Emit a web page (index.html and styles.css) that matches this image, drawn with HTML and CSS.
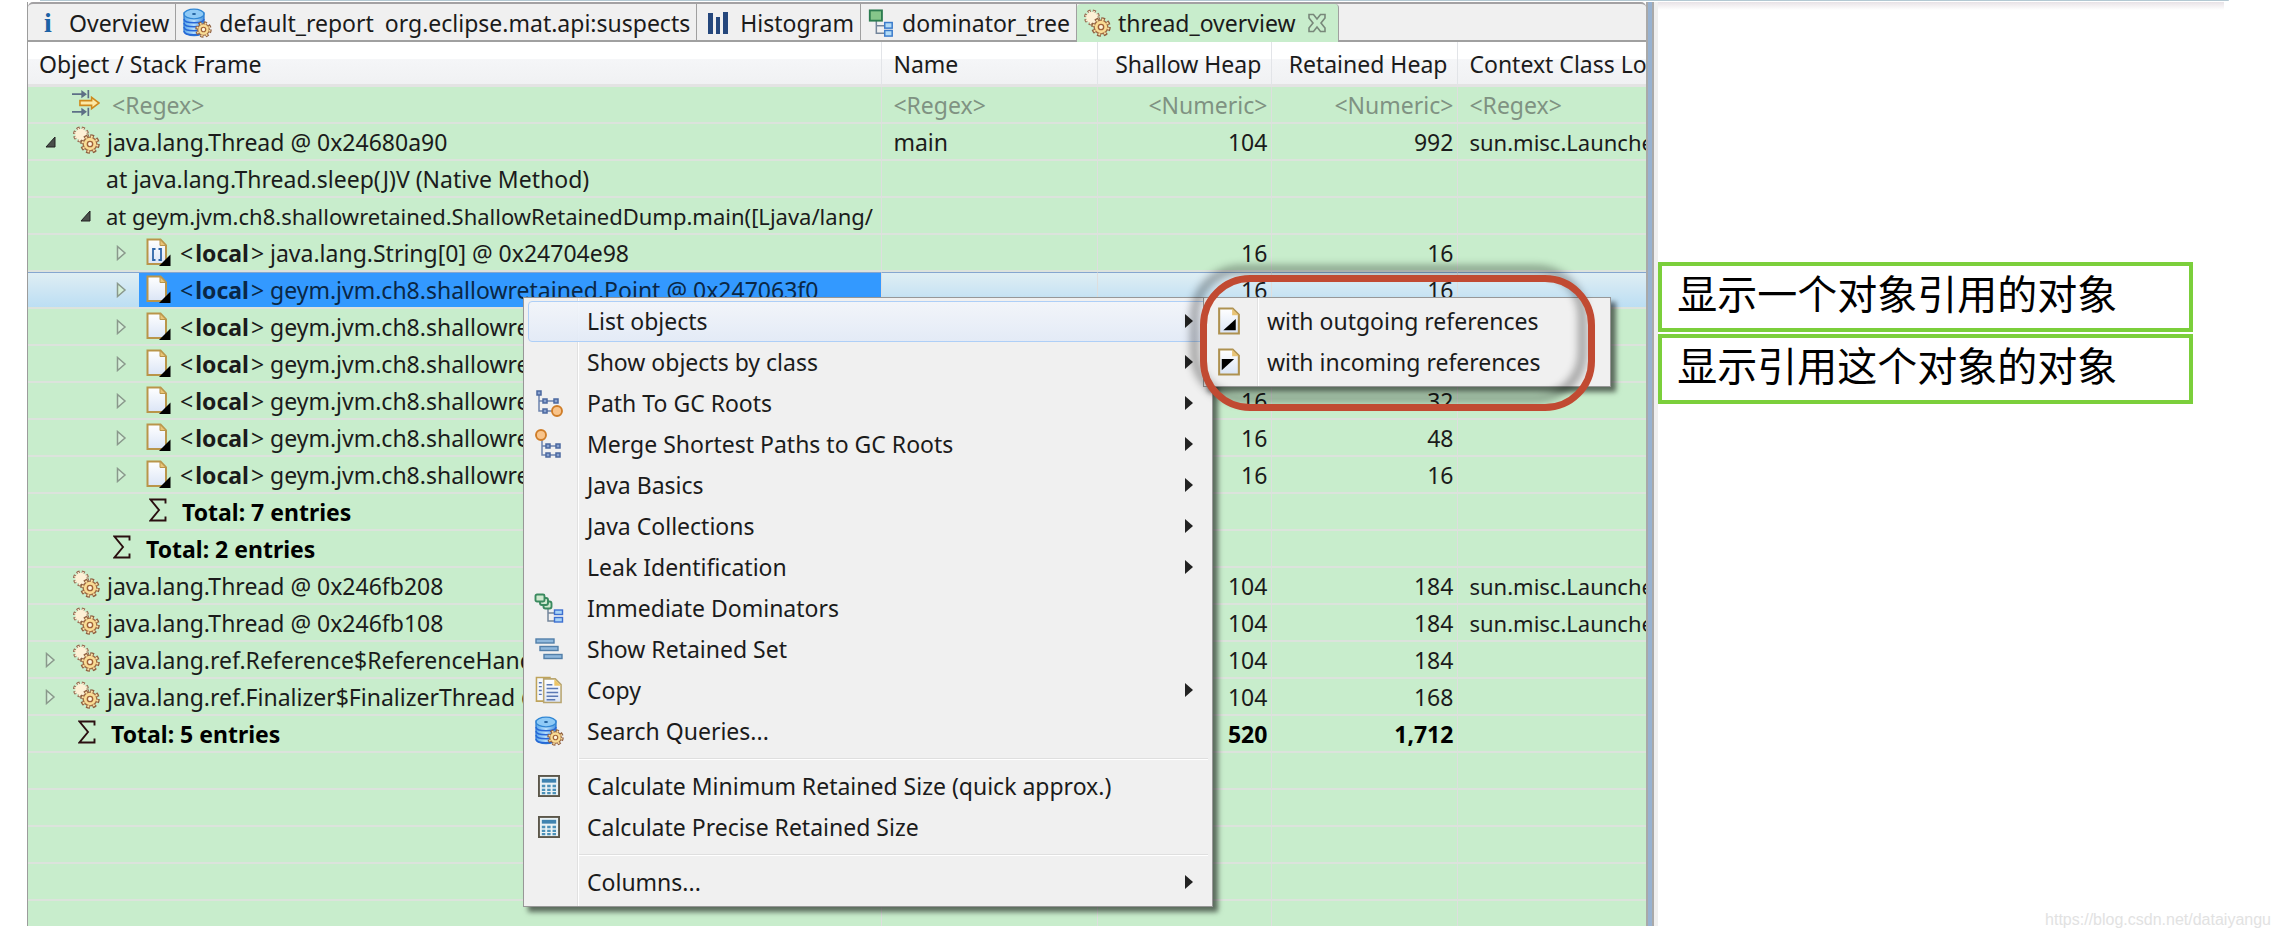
FILE: index.html
```html
<!DOCTYPE html>
<html lang="en">
<head>
<meta charset="utf-8">
<title>Memory Analyzer - thread_overview</title>
<link rel="stylesheet" href="styles.css">
</head>
<body>
<svg class="defs" aria-hidden="true">
  <defs>
    <linearGradient id="paper" x1="0" y1="0" x2="0" y2="1"><stop offset="0" stop-color="#fff"/><stop offset="1" stop-color="#dbe5f6"/></linearGradient>
    <linearGradient id="disk" x1="0" y1="0" x2="1" y2="0"><stop offset="0" stop-color="#5aa9ec"/><stop offset=".5" stop-color="#b9dffb"/><stop offset="1" stop-color="#4a95e0"/></linearGradient>
    <g id="gear">
      <circle r="5.7" fill="none" stroke="#8f5f40" stroke-width="2.6" stroke-dasharray="2.6 1.88"/>
      <circle r="4.9" fill="#f9dc94" stroke="#a06a42" stroke-width="1"/>
      <circle r="5.3" fill="none" stroke="#f8dfa2" stroke-width="1.5" stroke-dasharray="1.3 2.863" stroke-dashoffset="-.5"/>
      <circle r="1.9" fill="#fff6dc" stroke="#a06238" stroke-width="1"/>
    </g>
    <g id="gear-pale">
      <circle r="5.7" fill="none" stroke="#97694f" stroke-width="2.6" stroke-dasharray="2.6 1.88"/>
      <circle r="5" fill="#fdf1d6"/>
      <circle r="5.3" fill="none" stroke="#fdf1d6" stroke-width="1.5" stroke-dasharray="1.3 2.863" stroke-dashoffset="-.5"/>
    </g>
    <symbol id="i-gears" viewBox="0 0 28 28">
      <g transform="translate(9 8.5)"><use href="#gear-pale" transform="scale(1.15)"/></g>
      <g transform="translate(18 18)"><use href="#gear" transform="scale(1.4)"/></g>
    </symbol>
    <symbol id="i-db" viewBox="0 0 30 30">
      <path d="M2 5v18c0 6 20 6 20 0V5z" fill="url(#disk)" stroke="#2f7bd0" stroke-width="1.3"/>
      <path d="M2 11c0 5 20 5 20 0M2 15c0 5 20 5 20 0M2 19c0 5 20 5 20 0M2 23c0 5 20 5 20 0" fill="none" stroke="#2767d8" stroke-width="1.5"/>
      <ellipse cx="12" cy="6" rx="10" ry="4.8" fill="#8fcaf6" stroke="#2f86d4" stroke-width="1.3"/>
      <ellipse cx="12" cy="6" rx="2" ry="1" fill="#1f5f9e"/>
      <g transform="translate(21.5 21.5)"><use href="#gear" transform="scale(1.18)"/></g>
    </symbol>
    <symbol id="i-hist" viewBox="0 0 22 24"><path d="M1 2h5v21H1zM9 6h4v17H9zM16 1h5v22h-5z" fill="#25477c"/></symbol>
    <symbol id="i-dom" viewBox="0 0 28 30">
      <path d="M9 12v14h9M9 18h9" fill="none" stroke="#73859b" stroke-width="1.6"/>
      <rect x="2" y="1.500" width="13" height="11" fill="#86c68a" stroke="#2d7c50" stroke-width="2"/>
      <rect x="18" y="14.500" width="8" height="6" fill="#b3dcf7" stroke="#3c7ccb" stroke-width="1.6"/>
      <rect x="18" y="23" width="8" height="6" fill="#b3dcf7" stroke="#3c7ccb" stroke-width="1.6"/>
    </symbol>
    <symbol id="i-close" viewBox="0 0 20 20"><path d="M2 1.500h4.500L10 6l3.500-4.500H18V5l-4 5 4 5v3.500h-4.500L10 14l-3.500 4.500H2V15l4-5-4-5z" fill="none" stroke="#78877a" stroke-width="1.6"/></symbol>
    <symbol id="i-filter" viewBox="0 0 30 28">
      <path d="M0 4.500h13M0 23.500h13M17.500 0v9M17.500 19v9" stroke="#5d6f86" stroke-width="1.8"/>
      <path d="M10 0l6 4.500-6 4.500zM10 19l6 4.500-6 4.500z" fill="#5d6f86"/>
      <path d="M8.500 11.500H21V8l8 6-8 6v-3.500H8.500z" fill="#fdeaa6" stroke="#cf8a1c" stroke-width="1.7"/>
    </symbol>
    <symbol id="i-page" viewBox="0 0 25 28">
      <path d="M1.500 1.500h13L20 7.500V26H1.500z" fill="url(#paper)" stroke="#b9954a" stroke-width="2"/>
      <path d="M14 1.500v6h6z" fill="#e9c477" stroke="#b9954a"/>
      <path d="M24.500 16.500V28H13z" fill="#000"/>
    </symbol>
    <symbol id="i-array" viewBox="0 0 25 28">
      <use href="#i-page"/>
      <path d="M9.500 11H7v11h2.500M12.500 11H15v11h-2.500" fill="none" stroke="#2f66a8" stroke-width="1.8"/>
    </symbol>
    <symbol id="i-sigma" viewBox="0 0 18 24"><path d="M16.500 5.500V1.500H1.500L10 12 1.500 22.500h15v-4" fill="none" stroke="#2a0f10" stroke-width="1.900"/></symbol>
    <symbol id="i-open" viewBox="0 0 16 12"><path d="M13 1v10H4z" fill="#4a4f4b" stroke="#222"/></symbol>
    <symbol id="i-shut" viewBox="0 0 12 16"><path d="M2.500 1.500v13L10 8z" fill="#d5f0d8" stroke="#8a998c" stroke-width="1.500"/></symbol>
    <symbol id="i-path" viewBox="0 0 28 28">
      <path d="M4 4v18h14M4 12h16" fill="none" stroke="#6c83ad" stroke-width="1.500"/>
      <path d="M2 2h4v4H2zM8 10h4v4H8zM19 10h4v4h-4zM8 20h4v4H8z" fill="#8aa3d0" stroke="#4b689f" stroke-width="1.500"/>
      <circle cx="22" cy="22" r="5" fill="#f9c48a" stroke="#cf7d28" stroke-width="1.900"/>
    </symbol>
    <symbol id="i-merge" viewBox="0 0 28 30">
      <path d="M7 11v15h18M7 17h18" fill="none" stroke="#6c83ad" stroke-width="1.500"/>
      <path d="M11 15h4v4h-4zM21 15h4v4h-4zM11 24h4v4h-4zM21 24h4v4h-4z" fill="#8aa3d0" stroke="#4b689f" stroke-width="1.500"/>
      <circle cx="6" cy="6" r="5" fill="#f9c48a" stroke="#cf7d28" stroke-width="1.900"/>
    </symbol>
    <symbol id="i-imm" viewBox="0 0 30 30">
      <path d="M14 15v13h8M14 20h8" fill="none" stroke="#73859b" stroke-width="1.500"/>
      <g fill="#cfe9cf" stroke="#3a8a5f" stroke-width="1.900"><rect x="9.500" y="8.500" width="8" height="7" rx="2"/><rect x="6" y="5" width="8" height="7" rx="2"/><rect x="1.500" y="1.500" width="9" height="7" rx="1.500"/></g>
      <rect x="20.500" y="17" width="8" height="4.500" fill="#a8d4f8" stroke="#3c6fd0" stroke-width="1.400"/>
      <rect x="20.500" y="24.500" width="8" height="4.500" fill="#a8d4f8" stroke="#3c6fd0" stroke-width="1.400"/>
    </symbol>
    <symbol id="i-set" viewBox="0 0 28 22"><g fill="#8fb8dc" stroke="#527fa9" stroke-width="1.400"><rect x="1" y="1" width="18" height="4"/><rect x="5" y="8.500" width="18" height="4"/><rect x="9" y="16.500" width="18" height="4"/></g></symbol>
    <symbol id="i-copy" viewBox="0 0 29 29">
      <path d="M1.500 1.500h14V26h-14z" fill="#f5f8fd" stroke="#bfa35a" stroke-width="1.600"/>
      <path d="M4 7h3M4 11h3M4 15h3M4 19h3" stroke="#5a78b4" stroke-width="1.400"/>
      <path d="M9 3h12l6 6v18.500H9z" fill="url(#paper)" stroke="#b8a570" stroke-width="1.600"/>
      <path d="M20 3v7h7z" fill="#edc566"/>
      <path d="M12 9h6M12 13h12M12 17h12M12 21h12M12 24.500h9" stroke="#5a78b4" stroke-width="1.500"/>
    </symbol>
    <symbol id="i-calc" viewBox="0 0 23 23">
      <rect x="1" y="1" width="21" height="21" fill="#e9f2f5" stroke="#5c574a" stroke-width="2"/>
      <path d="M4 4h15v4H4z" fill="#3f83b0"/>
      <path d="M4 11.500h15M4 15.500h15M4 19h15" stroke="#4c91b8" stroke-width="2.400" stroke-dasharray="3.600 2"/>
    </symbol>
    <symbol id="i-out" viewBox="0 0 22 27">
      <path d="M1.500 1.500h13l6 6V25.500h-19z" fill="url(#paper)" stroke="#ae9150" stroke-width="2"/>
      <path d="M14 1.500v6.500h6.500z" fill="#e9c477"/><path d="M17.500 11.500v11H5.500z"/>
    </symbol>
    <symbol id="i-in" viewBox="0 0 22 27">
      <path d="M1.500 1.500h13l6 6V25.500h-19z" fill="url(#paper)" stroke="#ae9150" stroke-width="2"/>
      <path d="M14 1.500v6.500h6.500z" fill="#e9c477"/><path d="M4 10.500v11l12-11z"/>
    </symbol>
    <symbol id="i-more" viewBox="0 0 8 14"><path d="M0 0v14l8-7z" fill="#222"/></symbol>
  </defs>
</svg>

<div class="page">
  <main class="workbench">
    <section class="view">
      <nav class="tabs" role="tablist">
        <button class="tab" role="tab"><span class="info">i</span>Overview</button>
        <button class="tab" role="tab"><svg class="ic30"><use href="#i-db"/></svg><span>default_report</span><span class="second">org.eclipse.mat.api:suspects</span></button>
        <button class="tab" role="tab"><svg class="ic22"><use href="#i-hist"/></svg>Histogram</button>
        <button class="tab" role="tab"><svg class="ic28"><use href="#i-dom"/></svg>dominator_tree</button>
        <button class="tab active" role="tab" aria-selected="true"><svg class="ic28"><use href="#i-gears"/></svg>thread_overview<svg class="close"><use href="#i-close"/></svg></button>
      </nav>
      <table class="tree">
        <colgroup><col class="c-object"><col class="c-name"><col class="c-shallow"><col class="c-retained"><col class="c-loader"></colgroup>
        <thead>
          <tr><th>Object / Stack Frame</th><th>Name</th><th class="num">Shallow Heap</th><th class="num">Retained Heap</th><th>Context Class Lo</th></tr>
        </thead>
        <tbody>
          <tr class="filter"><td><div class="node l0"><span class="tw"></span><svg class="icon"><use href="#i-filter"/></svg><span class="label">&lt;Regex&gt;</span></div></td><td>&lt;Regex&gt;</td><td class="num">&lt;Numeric&gt;</td><td class="num">&lt;Numeric&gt;</td><td>&lt;Regex&gt;</td></tr>
          <tr><td><div class="node l0"><svg class="tw open"><use href="#i-open"/></svg><svg class="icon"><use href="#i-gears"/></svg><span class="label">java.lang.Thread @ 0x24680a90</span></div></td><td>main</td><td class="num">104</td><td class="num">992</td><td class="tight">sun.misc.Launche</td></tr>
          <tr><td><div class="node l1"><span class="tw"></span><span class="label">at java.lang.Thread.sleep(J)V (Native Method)</span></div></td><td></td><td></td><td></td><td></td></tr>
          <tr><td><div class="node l1"><svg class="tw open"><use href="#i-open"/></svg><span class="label tight">at geym.jvm.ch8.shallowretained.ShallowRetainedDump.main([Ljava/lang/</span></div></td><td></td><td></td><td></td><td></td></tr>
          <tr><td><div class="node l2"><svg class="tw"><use href="#i-shut"/></svg><span class="item"><svg class="icon"><use href="#i-array"/></svg><span class="label">&lt;<b>local</b>&gt; java.lang.String[0] @ 0x24704e98</span></span></div></td><td></td><td class="num">16</td><td class="num">16</td><td></td></tr>
          <tr class="selected"><td><div class="node l2"><svg class="tw"><use href="#i-shut"/></svg><span class="item"><svg class="icon"><use href="#i-page"/></svg><span class="label">&lt;<b>local</b>&gt; geym.jvm.ch8.shallowretained.Point @ 0x247063f0</span></span></div></td><td></td><td class="num">16</td><td class="num">16</td><td></td></tr>
          <tr><td><div class="node l2"><svg class="tw"><use href="#i-shut"/></svg><span class="item"><svg class="icon"><use href="#i-page"/></svg><span class="label">&lt;<b>local</b>&gt; geym.jvm.ch8.shallowre</span></span></div></td><td></td><td></td><td></td><td></td></tr>
          <tr><td><div class="node l2"><svg class="tw"><use href="#i-shut"/></svg><span class="item"><svg class="icon"><use href="#i-page"/></svg><span class="label">&lt;<b>local</b>&gt; geym.jvm.ch8.shallowre</span></span></div></td><td></td><td></td><td></td><td></td></tr>
          <tr><td><div class="node l2"><svg class="tw"><use href="#i-shut"/></svg><span class="item"><svg class="icon"><use href="#i-page"/></svg><span class="label">&lt;<b>local</b>&gt; geym.jvm.ch8.shallowre</span></span></div></td><td></td><td class="num">16</td><td class="num">32</td><td></td></tr>
          <tr><td><div class="node l2"><svg class="tw"><use href="#i-shut"/></svg><span class="item"><svg class="icon"><use href="#i-page"/></svg><span class="label">&lt;<b>local</b>&gt; geym.jvm.ch8.shallowre</span></span></div></td><td></td><td class="num">16</td><td class="num">48</td><td></td></tr>
          <tr><td><div class="node l2"><svg class="tw"><use href="#i-shut"/></svg><span class="item"><svg class="icon"><use href="#i-page"/></svg><span class="label">&lt;<b>local</b>&gt; geym.jvm.ch8.shallowre</span></span></div></td><td></td><td class="num">16</td><td class="num">16</td><td></td></tr>
          <tr class="total"><td><div class="node l2"><span class="tw"></span><svg class="sigma"><use href="#i-sigma"/></svg><span class="label">Total: 7 entries</span></div></td><td></td><td></td><td></td><td></td></tr>
          <tr class="total"><td><div class="node l1"><span class="tw"></span><svg class="sigma"><use href="#i-sigma"/></svg><span class="label">Total: 2 entries</span></div></td><td></td><td></td><td></td><td></td></tr>
          <tr><td><div class="node l0"><span class="tw"></span><svg class="icon"><use href="#i-gears"/></svg><span class="label">java.lang.Thread @ 0x246fb208</span></div></td><td></td><td class="num">104</td><td class="num">184</td><td class="tight">sun.misc.Launche</td></tr>
          <tr><td><div class="node l0"><span class="tw"></span><svg class="icon"><use href="#i-gears"/></svg><span class="label">java.lang.Thread @ 0x246fb108</span></div></td><td></td><td class="num">104</td><td class="num">184</td><td class="tight">sun.misc.Launche</td></tr>
          <tr><td><div class="node l0"><svg class="tw"><use href="#i-shut"/></svg><svg class="icon"><use href="#i-gears"/></svg><span class="label">java.lang.ref.Reference$ReferenceHand</span></div></td><td></td><td class="num">104</td><td class="num">184</td><td></td></tr>
          <tr><td><div class="node l0"><svg class="tw"><use href="#i-shut"/></svg><svg class="icon"><use href="#i-gears"/></svg><span class="label">java.lang.ref.Finalizer$FinalizerThread @</span></div></td><td></td><td class="num">104</td><td class="num">168</td><td></td></tr>
          <tr class="total"><td><div class="node l0"><span class="tw"></span><svg class="sigma"><use href="#i-sigma"/></svg><span class="label">Total: 5 entries</span></div></td><td></td><td class="num">520</td><td class="num">1,712</td><td></td></tr>
          <tr><td></td><td></td><td></td><td></td><td></td></tr>
          <tr><td></td><td></td><td></td><td></td><td></td></tr>
          <tr><td></td><td></td><td></td><td></td><td></td></tr>
          <tr><td></td><td></td><td></td><td></td><td></td></tr>
          <tr class="last"><td></td><td></td><td></td><td></td><td></td></tr>
        </tbody>
      </table>
    </section>
    <div class="sash"></div>

    <div class="menu context" role="menu">
      <button class="mi hot" role="menuitem"><span class="mic"></span><span class="mt">List objects</span><svg class="more"><use href="#i-more"/></svg></button>
      <button class="mi" role="menuitem"><span class="mic"></span><span class="mt">Show objects by class</span><svg class="more"><use href="#i-more"/></svg></button>
      <button class="mi" role="menuitem"><span class="mic"><svg class="ic28"><use href="#i-path"/></svg></span><span class="mt">Path To GC Roots</span><svg class="more"><use href="#i-more"/></svg></button>
      <button class="mi" role="menuitem"><span class="mic"><svg class="ic30"><use href="#i-merge"/></svg></span><span class="mt">Merge Shortest Paths to GC Roots</span><svg class="more"><use href="#i-more"/></svg></button>
      <button class="mi" role="menuitem"><span class="mic"></span><span class="mt">Java Basics</span><svg class="more"><use href="#i-more"/></svg></button>
      <button class="mi" role="menuitem"><span class="mic"></span><span class="mt">Java Collections</span><svg class="more"><use href="#i-more"/></svg></button>
      <button class="mi" role="menuitem"><span class="mic"></span><span class="mt">Leak Identification</span><svg class="more"><use href="#i-more"/></svg></button>
      <button class="mi" role="menuitem"><span class="mic"><svg class="ic30"><use href="#i-imm"/></svg></span><span class="mt">Immediate Dominators</span></button>
      <button class="mi" role="menuitem"><span class="mic"><svg class="ic28"><use href="#i-set"/></svg></span><span class="mt">Show Retained Set</span></button>
      <button class="mi" role="menuitem"><span class="mic"><svg class="ic28"><use href="#i-copy"/></svg></span><span class="mt">Copy</span><svg class="more"><use href="#i-more"/></svg></button>
      <button class="mi" role="menuitem"><span class="mic"><svg class="ic30"><use href="#i-db"/></svg></span><span class="mt">Search Queries...</span></button>
      <hr>
      <button class="mi" role="menuitem"><span class="mic"><svg class="ic22"><use href="#i-calc"/></svg></span><span class="mt">Calculate Minimum Retained Size (quick approx.)</span></button>
      <button class="mi" role="menuitem"><span class="mic"><svg class="ic22"><use href="#i-calc"/></svg></span><span class="mt">Calculate Precise Retained Size</span></button>
      <hr>
      <button class="mi" role="menuitem"><span class="mic"></span><span class="mt">Columns...</span><svg class="more"><use href="#i-more"/></svg></button>
    </div>
    <div class="menu submenu" role="menu">
      <button class="mi" role="menuitem"><span class="mic"><svg class="ic28"><use href="#i-out"/></svg></span><span class="mt">with outgoing references</span></button>
      <button class="mi" role="menuitem"><span class="mic"><svg class="ic28"><use href="#i-in"/></svg></span><span class="mt">with incoming references</span></button>
    </div>
    <div class="marker"></div>
  </main>

  <aside class="notes" lang="zh-CN">
    <p class="note">显示一个对象引用的对象</p>
    <p class="note">显示引用这个对象的对象</p>
    <p class="watermark">https://blog.csdn.net/dataiyangu</p>
  </aside>
</div>
</body>
</html>
```

FILE: styles.css
```css
* { box-sizing: border-box; }

body {
  margin: 0;
  background: #fff;
  color: #1b1b1b;
  font-family: "Noto Sans", "Open Sans", sans-serif;
  font-size: 23px;
  line-height: 28px;
}

button {
  font: inherit;
  color: inherit;
  border: 0;
  background: none;
  text-align: left;
  white-space: nowrap;
}

svg { flex: none; display: block; }
.defs { position: absolute; width: 0; height: 0; }
.ic22 { width: 22px; height: 24px; }
.ic28 { width: 28px; height: 28px; }
.ic30 { width: 30px; height: 30px; }

.page {
  display: flex;
  min-height: 100vh;
  padding-left: 27px;
  background: linear-gradient(#b3c8d2, #b3c8d2) 40px 0 / 96% 1px no-repeat;
}

.workbench {
  position: relative;
  display: flex;
  flex: 0 0 auto;
  width: 72.4%;
  align-self: flex-start;
  padding-top: 2px;
}

.view {
  flex: 1;
  min-width: 0;
  border-left: 1px solid #9c9c9c;
}

.sash {
  width: 12px;
  border-left: 2px solid #a9a9a9;
  border-right: 4px solid #efefef;
  background: linear-gradient(90deg, #98b2d0 70%, #a9a9a9 70%);
}

/* Editor tabs */
.tabs {
  display: flex;
  height: 40px;
  border-top: 2px solid #a3a1a3;
  border-radius: 5px 5px 0 0;
  background: #f0f0f0;
  box-shadow: inset 0 -2px #a0a0a0;
}

.tab {
  display: flex;
  align-items: center;
  gap: 7px;
  padding: 0 6px 0 6px;
  border-right: 1px solid #a0a0a0;
}

.tab.active { background: #c8edcc; border-radius: 4px 4px 0 0; }
.tab .second { margin-left: 4px; }
.tab .ic22 { margin: 0 4px; }
.tab .close { width: 20px; height: 20px; margin: 0 5px; }
.info {
  width: 28px;
  text-align: center;
  font-family: "Liberation Serif", serif;
  font-weight: bold;
  font-size: 28px;
  color: #1c62a5;
}

/* Tree table */
.tree {
  width: 100%;
  table-layout: fixed;
  border-collapse: separate;
  border-spacing: 0;
  background: #c8edcc;
}

.c-object { width: 52.8%; }
.c-name { width: 13.3%; }
.c-shallow { width: 10.8%; }
.c-retained { width: 11.5%; }
.c-loader { width: 11.6%; }

.tree th, .tree td {
  overflow: hidden;
  white-space: nowrap;
  text-align: left;
  font-weight: normal;
}

.tree th {
  height: 45px;
  padding: 2px 10px 0 11px;
  border-right: 1px solid #e2e4e8;
  border-bottom: 3px solid #e3e3e3;
  background: linear-gradient(#fff 40%, #f5f6f8 41%, #f0f1f3);
}

.tree td {
  height: 37px;
  padding: 0 4px 0 11px;
  border-right: 1px solid #dedede;
  border-bottom: 2px solid #dce3dc;
}

.tree td:first-child { padding: 0; }
.tree th:last-child, .tree td:last-child { padding-right: 0; border-right: 0; }
.tree .num { text-align: right; }
.tree .tight { font-size: 22px; }
.tree .last td { height: 25px; border-bottom: 0; }
.filter { color: #7f9282; }
.tree .total td { font-weight: bold; color: #000; }

.node { display: flex; align-items: center; height: 35px; }
.label b { margin: 0 2px; }
.l0 { padding-left: 14px; }
.l1 { padding-left: 49px; }
.l2 { padding-left: 85px; }
.tw { flex: none; width: 16px; height: 16px; }
.open { height: 12px; }
.icon { width: 28px; height: 28px; margin: 0 7px 4px 14px; }
.filter .icon { margin-right: 12px; }
.l1 .label { margin-left: 13px; }
.sigma { width: 18px; height: 24px; margin: 0 15px 4px 20px; }
.l1 .sigma + .label { margin-left: 0; }

.item {
  display: flex;
  align-items: center;
  flex: 1;
  height: 35px;
  margin-left: 10px;
}
.item .icon { width: 25px; margin: 0 9px 2px 7px; }

.selected td {
  border-top: 1px solid #86a6cf;
  background: linear-gradient(#dfeef3, #bcdef3);
}
.selected .node, .selected .item { height: 34px; }
.selected .item { background: #3399ff; color: #0a2745; }

/* Menus */
.menu {
  position: absolute;
  padding: 3px 4px;
  border: 1px solid #979797;
  background: linear-gradient(90deg, #f0f0f0 53px, #e1e1e1 53px, #e1e1e1 54px, #fff 54px, #fff 55px, #f0f0f0 55px);
  box-shadow: 5px 5px 5px rgba(0, 0, 0, .55);
}

.context { left: 496px; top: 297px; width: 690px; }
.submenu { left: 1176px; top: 297px; width: 408px; }

.mi {
  display: flex;
  align-items: center;
  width: 100%;
  height: 41px;
  padding: 0 14px 2px 5px;
  border: 1px solid transparent;
  border-radius: 4px;
}

.hot { border-color: #aecff7; background: linear-gradient(rgba(242, 245, 250, .9), rgba(226, 234, 247, .9)); }
.mic { display: flex; justify-content: center; flex: none; width: 30px; }
.mt { flex: 1; margin-left: 23px; }
.more { width: 8px; height: 14px; }

.menu hr {
  height: 2px;
  margin: 6px 0 6px 51px;
  border: 0;
  border-top: 1px solid #dfdfdf;
  background: #fff;
}

/* Hand-drawn highlight around the submenu */
.marker {
  position: absolute;
  left: 1173px;
  top: 275px;
  width: 395px;
  height: 136px;
  border: 7px solid #c14a32;
  border-radius: 50px;
  filter: drop-shadow(-9px -9px 4px rgba(0, 0, 0, .4));
}

/* Notes */
.notes {
  display: flex;
  flex-direction: column;
  flex: 1;
  min-width: 0;
  padding-top: 262px;
  background: linear-gradient(#e8e2e6, #fff) 0 2px / 91% 8px no-repeat;
}

.note {
  width: 86%;
  margin: 0 0 2px;
  padding: 1px 15px 11px;
  border: 4px solid #7bcf3b;
  color: #000;
  font-family: "Noto Sans CJK SC", sans-serif;
  font-size: 40px;
  line-height: 50px;
  white-space: nowrap;
}

.watermark {
  margin: auto 9px 8px 0;
  text-align: right;
  color: #e2e2e2;
  font-family: "Liberation Sans", sans-serif;
  font-size: 16px;
  line-height: 20px;
}
```
